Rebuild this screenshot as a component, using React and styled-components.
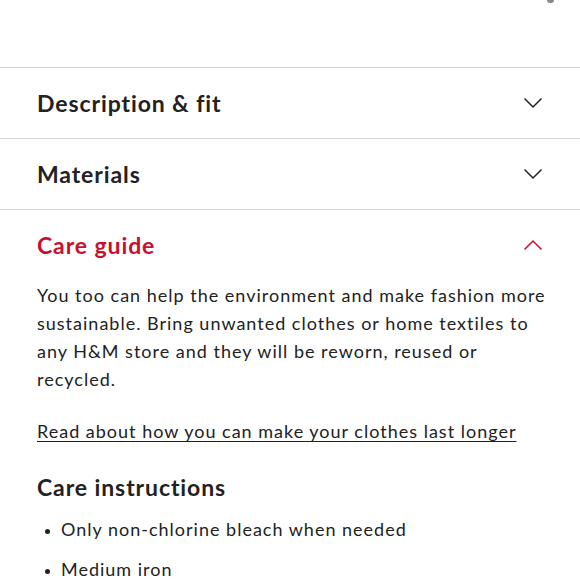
import React from 'react';
import styled, {createGlobalStyle} from 'styled-components';

const Global = createGlobalStyle`
	body {
		margin: 0;
		background: #fff;
		font-family: Lato, "Noto Sans", sans-serif;
		color: #222;
	}
`;

const Page = styled.div`
	width: 580px;
	height: 580px;
	overflow: hidden;
	background: #fff;
`;

const TopStrip = styled.div`
	height: 67px;
	position: relative;
`;

// the bottom tip of an icon that sits above the view
const Crumb = styled.div`
	position: absolute;
	top: 0;
	left: 547px;
	width: 7px;
	height: 3px;
	border-radius: 0 0 3px 3px;
	background: #8a8a8a;
`;

const Item = styled.section`
	border-top: 1px solid #d6d6d6;
`;

const Header = styled.div`
	height: 70px;
	padding: 0 37px;
	display: flex;
	align-items: center;
	justify-content: space-between;
	cursor: pointer;
`;

const Title = styled.h2`
	margin: 0;
	font-size: 23px;
	font-weight: 700;
	letter-spacing: 0.9px;
	color: ${p => (p.$open ? '#c8102e' : '#222')};
`;

const Body = styled.div`
	padding: 1px 31px 0 37px;
`;

const Para = styled.p`
	margin: 0;
	font-size: 18px;
	line-height: 28px;
	letter-spacing: 1px;
`;

const TextLink = styled.a`
	display: inline-block;
	margin-top: 24px;
	font-size: 18px;
	line-height: 28px;
	letter-spacing: 1px;
	color: #222;
	text-decoration: underline;
	text-underline-offset: 3px;
`;

const SubTitle = styled.h3`
	margin: 28px 0 0;
	font-size: 23px;
	line-height: 28px;
	font-weight: 700;
	letter-spacing: 0.9px;
`;

const List = styled.ul`
	margin: 14px 0 0;
	padding: 0 0 0 24px;
	font-size: 18px;
	line-height: 28px;
	letter-spacing: 1px;

	li {
		margin-bottom: 12px;
	}
	li::marker {
		font-size: 14px;
	}
`;

function Chevron({up, color}) {
	return (
		<svg width="20" height="12" viewBox="0 0 20 12" fill="none">
			<path
				d={up ? 'M1.5 10.5 L10 2 L18.5 10.5' : 'M1.5 1.5 L10 10 L18.5 1.5'}
				stroke={color}
				strokeWidth="1.5"
			/>
		</svg>
	);
}

function App() {
	return (
		<Page>
			<Global />
			<TopStrip>
				<Crumb />
			</TopStrip>

			<Item>
				<Header>
					<Title>Description &amp; fit</Title>
					<Chevron color="#222" />
				</Header>
			</Item>

			<Item>
				<Header>
					<Title>Materials</Title>
					<Chevron color="#222" />
				</Header>
			</Item>

			<Item>
				<Header>
					<Title $open>Care guide</Title>
					<Chevron up color="#c8102e" />
				</Header>
				<Body>
					<Para>
						You too can help the environment and make fashion more
						sustainable. Bring unwanted clothes or home textiles to
						any H&amp;M store and they will be reworn, reused or
						recycled.
					</Para>
					<TextLink href="#">Read about how you can make your clothes last longer</TextLink>
					<SubTitle>Care instructions</SubTitle>
					<List>
						<li>Only non-chlorine bleach when needed</li>
						<li>Medium iron</li>
					</List>
				</Body>
			</Item>
		</Page>
	);
}

export default App;
